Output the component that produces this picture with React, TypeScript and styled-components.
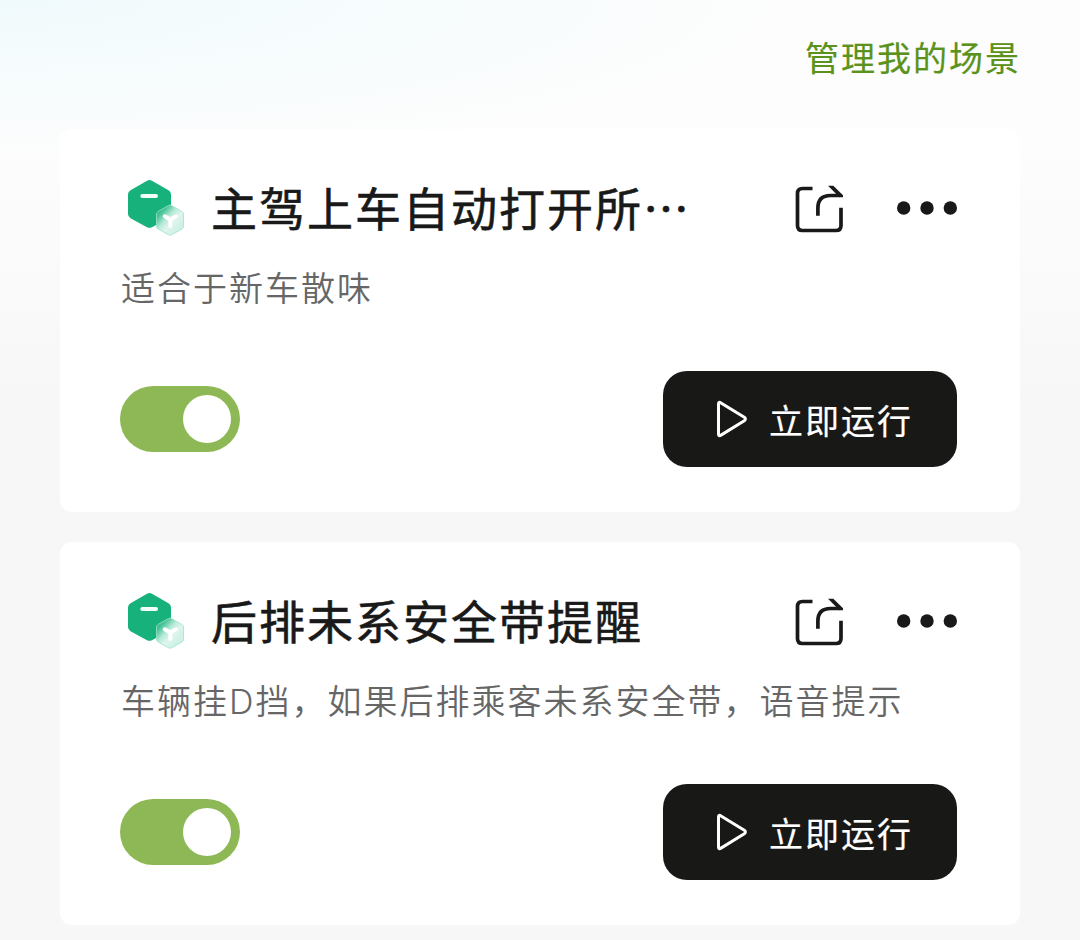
import React from "react";
import styled, { createGlobalStyle } from "styled-components";

const GlobalStyle = createGlobalStyle`
  * { box-sizing: border-box; }
  body {
    margin: 0;
    background: #f7f7f7;
    font-family: "Noto Sans CJK SC", sans-serif;
  }
`;

const Page = styled.main`
  height: 940px;
  overflow: hidden;
  padding: 0 60px;
  background:
    radial-gradient(ellipse 800px 160px at 0 0, #f0f9fc 0%, rgba(244, 252, 253, 0.75) 45%, rgba(253, 253, 253, 0) 100%),
    linear-gradient(180deg, #fdfdfd 0, #fdfdfd 150px, #f7f7f7 400px);
`;

const TopBar = styled.header`
  display: flex;
  justify-content: flex-end;
  height: 129px;
  padding-top: 32px;
`;

const ManageLink = styled.a`
  height: 50px;
  font-size: 34px;
  line-height: 50px;
  letter-spacing: 2px;
  margin-right: -1px;
  color: #5b921b;
  -webkit-text-stroke: 0.2px #5b921b;
`;

const CardList = styled.section`
  display: flex;
  flex-direction: column;
  gap: 30px;
`;

const Card = styled.article`
  display: flex;
  flex-direction: column;
  height: 383px;
  padding: 43px 62px 45px 60px;
  border-radius: 12px;
  background: #fff;
`;

const CardHead = styled.div`
  display: flex;
  align-items: center;
  height: 72px;
`;

const Title = styled.h2`
  flex: 1;
  margin: 0 0 0 21px;
  padding-bottom: 4px;
  font-size: 46px;
  font-weight: 400;
  line-height: 68px;
  letter-spacing: 2px;
  white-space: nowrap;
  color: #191919;
  -webkit-text-stroke: 0.6px #191919;
`;

const Actions = styled.div`
  display: flex;
  align-items: center;
  gap: 48px;
`;

const Description = styled.p`
  height: 50px;
  margin: 20px 0 0;
  padding-left: 1px;
  font-family: Inter, "Noto Sans CJK SC", sans-serif;
  font-size: 34px;
  font-weight: 350;
  line-height: 50px;
  letter-spacing: 2px;
  white-space: nowrap;
  color: #666;
`;

const CardFoot = styled.div`
  display: flex;
  align-items: center;
  justify-content: space-between;
  margin-top: 57px;
  padding-right: 1px;
`;

const Toggle = styled.button<{ $on: boolean }>`
  display: flex;
  align-items: center;
  justify-content: ${(p) => (p.$on ? "flex-end" : "flex-start")};
  width: 120px;
  height: 66px;
  padding: 0 9px;
  border: 0;
  border-radius: 33px;
  background: ${(p) => (p.$on ? "#8db855" : "#d8d8d8")};
`;

const Knob = styled.span`
  width: 48px;
  height: 48px;
  border-radius: 50%;
  background: #fff;
`;

const RunButton = styled.button`
  display: flex;
  align-items: center;
  gap: 20px;
  width: 294px;
  height: 96px;
  padding: 0 0 0 52px;
  border: 0;
  border-radius: 24px;
  background: #181816;
  color: #fff;
  font-family: inherit;
  font-size: 34px;
  line-height: 50px;
  letter-spacing: 2px;
  -webkit-text-stroke: 0.2px #fff;
`;

const RunLabel = styled.span`
  padding-top: 1px;
`;

const SceneIcon = ({ id }: { id: string }) => (
  <svg width="70" height="72" viewBox="0 0 70 72" fill="none">
    <defs>
      <linearGradient id={id} x1="37" y1="39" x2="60" y2="60" gradientUnits="userSpaceOnUse">
        <stop offset="0" stopColor="#27b583" />
        <stop offset="0.15" stopColor="#4cc499" />
        <stop offset="0.4" stopColor="#b9ead9" />
        <stop offset="0.6" stopColor="#def5ed" />
        <stop offset="1" stopColor="#c9f0e3" />
      </linearGradient>
    </defs>
    <path d="M27 8.700Q29.500 7.300 32 8.700L48.500 18.200Q51 19.600 51 22.600V42Q51 44.800 48.500 46.300L32 55.200Q29.500 56.500 27 55.200L10.500 46.200Q8 44.800 8 42V22.600Q8 19.600 10.500 18.200Z" fill="#17b27c" />
    <path d="M22.300 24H36" stroke="#f3fffb" strokeWidth="4" strokeLinecap="round" />
    <path d="M48.500 33.500Q50 32.700 51.500 33.500L62 39.500Q63.500 40.500 63.500 42V54.500Q63.500 56 62 57L51.500 62.800Q50 63.500 48.500 62.800L38 57Q36.500 56 36.500 54.500V42Q36.500 40.500 38 39.500Z" fill={`url(#${id})`} stroke="#a2e2cc" strokeWidth="0.8" />
    <path d="M44.800 44.300L50.300 47.500L56 44.300M50.300 47.500V54" stroke="#fff" strokeWidth="4" strokeLinecap="round" strokeLinejoin="round" />
  </svg>
);

const ShareIcon = () => (
  <svg width="54" height="54" viewBox="0 0 54 54" fill="none" stroke="#191919" strokeWidth="3.700">
    <path d="M18.500 7.500H8.500Q3.500 7.500 3.500 12.500V44.500Q3.500 49.500 8.500 49.500H42Q47 49.500 47 44.500V26.700" />
    <path d="M23.900 34.700V27Q23.900 14.500 36.500 14.500H46" />
    <path d="M34 4.800H39.300L49 14.200V16.300H45.500Z" fill="#191919" stroke="none" />
  </svg>
);

const MoreIcon = () => (
  <svg width="62" height="14" viewBox="0 0 62 14" fill="#191919">
    <circle cx="7.700" cy="7" r="6.700" />
    <circle cx="31" cy="7" r="6.700" />
    <circle cx="54.300" cy="7" r="6.700" />
  </svg>
);

const PlayIcon = () => (
  <svg width="34" height="40" viewBox="0 0 34 40" fill="none" stroke="#fff" strokeWidth="3" strokeLinejoin="round">
    <path d="M3.500 5Q3.500 2.300 6 3.900L29.300 18.300Q31.500 20 29.300 21.700L6 36.100Q3.500 37.700 3.500 35Z" />
  </svg>
);

const scenes = [
  { id: "scene-air", title: "主驾上车自动打开所…", description: "适合于新车散味", on: true },
  { id: "scene-belt", title: "后排未系安全带提醒", description: "车辆挂D挡，如果后排乘客未系安全带，语音提示", on: true },
];

export default function App() {
  return (
    <>
      <GlobalStyle />
      <Page lang="zh-CN">
        <TopBar>
          <ManageLink>管理我的场景</ManageLink>
        </TopBar>
        <CardList>
          {scenes.map((scene) => (
            <Card key={scene.id}>
              <CardHead>
                <SceneIcon id={scene.id} />
                <Title>{scene.title}</Title>
                <Actions>
                  <ShareIcon />
                  <MoreIcon />
                </Actions>
              </CardHead>
              <Description>{scene.description}</Description>
              <CardFoot>
                <Toggle $on={scene.on}>
                  <Knob />
                </Toggle>
                <RunButton>
                  <PlayIcon />
                  <RunLabel>立即运行</RunLabel>
                </RunButton>
              </CardFoot>
            </Card>
          ))}
        </CardList>
      </Page>
    </>
  );
}
